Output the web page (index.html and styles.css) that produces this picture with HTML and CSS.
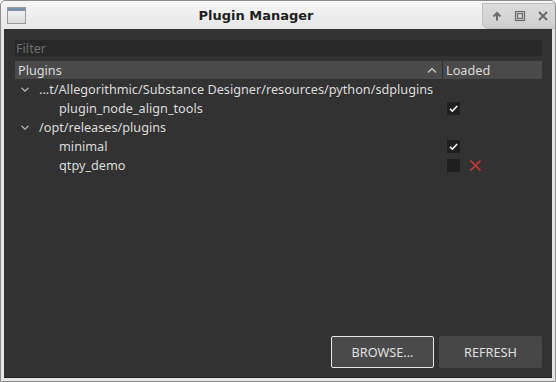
FILE: index.html
```html
<!DOCTYPE html>
<html lang="en">
<head>
    <meta charset="UTF-8">
    <title>Plugin Manager</title>
    <link rel="stylesheet" href="styles.css">
</head>
<body>
    <div class="window">
        <div class="titlebar">
            <div class="app-icon"><div class="app-icon-bar"></div></div>
            <div class="title">Plugin Manager</div>
            <div class="win-buttons">
                <svg width="12" height="12" viewBox="0 0 12 12"><path d="M6 10.5V3M2.5 6.5L6 3l3.5 3.5" fill="none" stroke="#6a6a6a" stroke-width="2"/></svg>
                <svg width="12" height="12" viewBox="0 0 12 12"><rect x="1.5" y="1.5" width="9" height="9" fill="none" stroke="#6a6a6a" stroke-width="1.2"/><rect x="3.5" y="3.5" width="5" height="5" fill="none" stroke="#6a6a6a" stroke-width="1.2"/></svg>
                <svg width="12" height="12" viewBox="0 0 12 12"><path d="M2 2l8 8M10 2l-8 8" fill="none" stroke="#6a6a6a" stroke-width="2"/></svg>
            </div>
        </div>
        <div class="content">
            <div class="filter">Filter</div>
            <div class="tree">
                <div class="tree-header">
                    <div class="col-name">Plugins
                        <svg class="sort" width="10" height="6" viewBox="0 0 10 6"><path d="M1 5.5L5 1.5l4 4" fill="none" stroke="#c8c8c8" stroke-width="1.3"/></svg>
                    </div>
                    <div class="col-loaded">Loaded</div>
                </div>
                <div class="row">
                    <div class="col-name"><svg class="chevron" width="8" height="5" viewBox="0 0 8 5"><path d="M0.5 0.8L4 4.2l3.5-3.4" fill="none" stroke="#b4b4b4" stroke-width="1.2"/></svg>...t/Allegorithmic/Substance Designer/resources/python/sdplugins</div>
                </div>
                <div class="row">
                    <div class="col-name child">plugin_node_align_tools</div>
                    <div class="col-loaded"><span class="check"><svg width="13" height="13" viewBox="0 0 13 13"><path d="M3 6.8l2.4 2.3L10.2 4" fill="none" stroke="#f2f2f2" stroke-width="1.6"/></svg></span></div>
                </div>
                <div class="row">
                    <div class="col-name"><svg class="chevron" width="8" height="5" viewBox="0 0 8 5"><path d="M0.5 0.8L4 4.2l3.5-3.4" fill="none" stroke="#b4b4b4" stroke-width="1.2"/></svg>/opt/releases/plugins</div>
                </div>
                <div class="row">
                    <div class="col-name child">minimal</div>
                    <div class="col-loaded"><span class="check"><svg width="13" height="13" viewBox="0 0 13 13"><path d="M3 6.8l2.4 2.3L10.2 4" fill="none" stroke="#f2f2f2" stroke-width="1.6"/></svg></span></div>
                </div>
                <div class="row">
                    <div class="col-name child">qtpy_demo</div>
                    <div class="col-loaded">
                        <span class="check"></span>
                        <svg class="error" width="13" height="13" viewBox="0 0 13 13"><path d="M1.5 1.5l10 10M11.5 1.5l-10 10" stroke="#d03a3a" stroke-width="1.6"/></svg>
                    </div>
                </div>
            </div>
            <div class="actions">
                <button class="btn focused">BROWSE...</button>
                <button class="btn">REFRESH</button>
            </div>
        </div>
    </div>
</body>
</html>
```

FILE: styles.css
```css
* {
    box-sizing: border-box;
    margin: 0;
    padding: 0;
}

body {
    width: 556px;
    height: 382px;
    overflow: hidden;
    background-color: #ffffff;
    font-family: "Noto Sans", sans-serif;
    font-size: 12.7px;
}

.window {
    display: flex;
    flex-direction: column;
    width: 556px;
    height: 382px;
    border: 1px solid #8c8c8c;
    border-radius: 5px 5px 0 0;
    background: #e6e6e6;
}

.titlebar {
    display: flex;
    align-items: center;
    height: 28px;
    padding-left: 6px;
    background: linear-gradient(#f6f6f6, #e6e6e6);
    border-radius: 5px 5px 0 0;
}

.app-icon {
    width: 19px;
    height: 17px;
    border: 1px solid #9a9a9a;
    background: linear-gradient(#f4f4f4, #dcdcdc);
}

.app-icon-bar {
    height: 3px;
    background: #7d8fa8;
}

.title {
    flex: 1;
    text-align: center;
    font-family: "DejaVu Sans", sans-serif;
    font-weight: bold;
    font-size: 13px;
    color: #1e1e1e;
    padding-left: 4px;
}

.win-buttons {
    display: flex;
    align-items: center;
    gap: 11px;
    height: 26px;
    margin-top: 1px;
    padding: 0 6px 0 8px;
    background: linear-gradient(#dcdcdc, #cfcfcf);
    border: 1px solid #bdbdbd;
    border-right: none;
    border-radius: 0 0 0 7px;
}

.content {
    flex: 1;
    display: flex;
    flex-direction: column;
    margin: 0 3px 3px;
    padding: 11px 10px 9px 11px;
    background: #323232;
    color: #dcdcdc;
    border-bottom: 1px solid #1e1e1e;
}

.filter {
    height: 16px;
    line-height: 16px;
    padding-left: 1px;
    background: #282828;
    color: #6e6e6e;
}

.tree {
    flex: 1;
    margin-top: 5px;
}

.tree-header {
    display: flex;
    height: 18px;
    line-height: 18px;
    background: #4a4a4a;
    color: #dadada;
}

.tree-header .col-name {
    display: flex;
    align-items: center;
    justify-content: space-between;
    padding: 0 5px 0 3px;
    border-right: 1px solid #2e2e2e;
}

.col-name {
    width: 428px;
    white-space: nowrap;
}

.col-loaded {
    flex: 1;
    display: flex;
    align-items: center;
    gap: 9px;
    padding-left: 3px;
}

.row {
    display: flex;
    height: 19px;
    line-height: 19px;
}

.tree-header + .row {
    margin-top: 1px;
}

.chevron {
    margin: 0 10px 2px 6px;
    vertical-align: middle;
}

.child {
    padding-left: 44px;
}

.row .col-loaded {
    padding-left: 4px;
}

.check {
    display: inline-block;
    width: 13px;
    height: 13px;
    background: #1f1f1f;
}

.check svg {
    display: block;
}

.actions {
    display: flex;
    justify-content: flex-end;
    gap: 5px;
}

.btn {
    width: 103px;
    height: 32px;
    background: #474747;
    color: #e0e0e0;
    border: 1px solid #474747;
    border-radius: 2px;
    font-family: "Noto Sans", sans-serif;
    font-size: 12.7px;
}

.btn.focused {
    background: #4a4a4a;
    border-color: #e8e8e8;
}
```
